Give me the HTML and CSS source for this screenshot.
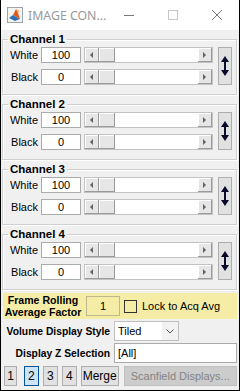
FILE: index.html
```html
<!DOCTYPE html>
<html lang="en">
<head>
    <meta charset="UTF-8">
    <title>IMAGE CONTROLS</title>
    <link rel="stylesheet" href="styles.css">
</head>
<body>
    <div class="window">
        <div class="titlebar">
            <svg class="app-icon" width="16" height="16" viewBox="0 0 16 16">
                <rect x="0.5" y="0.5" width="15" height="15" fill="#f4f4f4" stroke="#9aa3ad"/>
                <polygon points="2,11 6,8 8,9 13,12 8,14" fill="#2f6fb3"/>
                <polygon points="6,8 9,2 11,6 13,12 8,9" fill="#e2571e"/>
                <polygon points="9,2 11,6 12,4" fill="#f3a32b"/>
            </svg>
            <span class="title">IMAGE CON...</span>
            <div class="win-btns">
                <span class="win-btn">
                    <svg width="10" height="10" viewBox="0 0 10 10"><line x1="0" y1="5.5" x2="10" y2="5.5" stroke="#777" stroke-width="1"/></svg>
                </span>
                <span class="win-btn">
                    <svg width="10" height="10" viewBox="0 0 10 10"><rect x="0.5" y="0.5" width="9" height="9" fill="none" stroke="#c8c8c8"/></svg>
                </span>
                <span class="win-btn">
                    <svg width="10" height="10" viewBox="0 0 10 10"><path d="M0 0L10 10M10 0L0 10" stroke="#777" stroke-width="1"/></svg>
                </span>
            </div>
        </div>

        <div class="content">
            <fieldset class="channel">
                <legend>Channel 1</legend>
                <div class="channel-body">
                    <div class="rows">
                        <div class="row">
                            <label class="row-label">White</label>
                            <div class="edit">100</div>
                            <div class="slider">
                                <span class="arrow"><span class="tri-left"></span></span>
                                <span class="thumb"></span>
                                <span class="track"></span>
                                <span class="arrow"><span class="tri-right"></span></span>
                            </div>
                        </div>
                        <div class="row">
                            <label class="row-label">Black</label>
                            <div class="edit">0</div>
                            <div class="slider">
                                <span class="arrow"><span class="tri-left"></span></span>
                                <span class="thumb"></span>
                                <span class="track"></span>
                                <span class="arrow"><span class="tri-right"></span></span>
                            </div>
                        </div>
                    </div>
                    <button class="swap">
                        <svg width="8" height="20" viewBox="0 0 8 20"><path d="M4 3V17" stroke="#0a0a2a" stroke-width="2"/><polygon points="0,6 4,0 8,6" fill="#0a0a2a"/><polygon points="0,14 4,20 8,14" fill="#0a0a2a"/></svg>
                    </button>
                </div>
            </fieldset>

            <fieldset class="channel">
                <legend>Channel 2</legend>
                <div class="channel-body">
                    <div class="rows">
                        <div class="row">
                            <label class="row-label">White</label>
                            <div class="edit">100</div>
                            <div class="slider">
                                <span class="arrow"><span class="tri-left"></span></span>
                                <span class="thumb"></span>
                                <span class="track"></span>
                                <span class="arrow"><span class="tri-right"></span></span>
                            </div>
                        </div>
                        <div class="row">
                            <label class="row-label">Black</label>
                            <div class="edit">0</div>
                            <div class="slider">
                                <span class="arrow"><span class="tri-left"></span></span>
                                <span class="thumb"></span>
                                <span class="track"></span>
                                <span class="arrow"><span class="tri-right"></span></span>
                            </div>
                        </div>
                    </div>
                    <button class="swap">
                        <svg width="8" height="20" viewBox="0 0 8 20"><path d="M4 3V17" stroke="#0a0a2a" stroke-width="2"/><polygon points="0,6 4,0 8,6" fill="#0a0a2a"/><polygon points="0,14 4,20 8,14" fill="#0a0a2a"/></svg>
                    </button>
                </div>
            </fieldset>

            <fieldset class="channel">
                <legend>Channel 3</legend>
                <div class="channel-body">
                    <div class="rows">
                        <div class="row">
                            <label class="row-label">White</label>
                            <div class="edit">100</div>
                            <div class="slider">
                                <span class="arrow"><span class="tri-left"></span></span>
                                <span class="thumb"></span>
                                <span class="track"></span>
                                <span class="arrow"><span class="tri-right"></span></span>
                            </div>
                        </div>
                        <div class="row">
                            <label class="row-label">Black</label>
                            <div class="edit">0</div>
                            <div class="slider">
                                <span class="arrow"><span class="tri-left"></span></span>
                                <span class="thumb"></span>
                                <span class="track"></span>
                                <span class="arrow"><span class="tri-right"></span></span>
                            </div>
                        </div>
                    </div>
                    <button class="swap">
                        <svg width="8" height="20" viewBox="0 0 8 20"><path d="M4 3V17" stroke="#0a0a2a" stroke-width="2"/><polygon points="0,6 4,0 8,6" fill="#0a0a2a"/><polygon points="0,14 4,20 8,14" fill="#0a0a2a"/></svg>
                    </button>
                </div>
            </fieldset>

            <fieldset class="channel">
                <legend>Channel 4</legend>
                <div class="channel-body">
                    <div class="rows">
                        <div class="row">
                            <label class="row-label">White</label>
                            <div class="edit">100</div>
                            <div class="slider">
                                <span class="arrow"><span class="tri-left"></span></span>
                                <span class="thumb"></span>
                                <span class="track"></span>
                                <span class="arrow"><span class="tri-right"></span></span>
                            </div>
                        </div>
                        <div class="row">
                            <label class="row-label">Black</label>
                            <div class="edit">0</div>
                            <div class="slider">
                                <span class="arrow"><span class="tri-left"></span></span>
                                <span class="thumb"></span>
                                <span class="track"></span>
                                <span class="arrow"><span class="tri-right"></span></span>
                            </div>
                        </div>
                    </div>
                    <button class="swap">
                        <svg width="8" height="20" viewBox="0 0 8 20"><path d="M4 3V17" stroke="#0a0a2a" stroke-width="2"/><polygon points="0,6 4,0 8,6" fill="#0a0a2a"/><polygon points="0,14 4,20 8,14" fill="#0a0a2a"/></svg>
                    </button>
                </div>
            </fieldset>

            <div class="rolling">
                <div class="rolling-label">Frame Rolling<br>Average Factor</div>
                <div class="edit rolling-edit">1</div>
                <span class="checkbox"></span>
                <span class="check-label">Lock to Acq Avg</span>
            </div>

            <div class="form-row">
                <span class="form-label">Volume Display Style</span>
                <div class="popup">
                    <span class="popup-value">Tiled</span>
                    <span class="popup-arrow">
                        <svg width="8" height="5" viewBox="0 0 8 5"><path d="M0.5 0.5L4 4L7.5 0.5" fill="none" stroke="#555"/></svg>
                    </span>
                </div>
            </div>

            <div class="form-row">
                <span class="form-label">Display Z Selection</span>
                <div class="edit z-edit">[All]</div>
            </div>

            <div class="tabs">
                <button class="btn btn-num">1</button>
                <button class="btn btn-num btn-active">2</button>
                <button class="btn btn-num">3</button>
                <button class="btn btn-num">4</button>
                <button class="btn btn-merge">Merge</button>
                <button class="btn btn-disabled">Scanfield Displays...</button>
            </div>
        </div>
    </div>
</body>
</html>
```

FILE: styles.css
```css
* {
    margin: 0;
    padding: 0;
    box-sizing: border-box;
}

body {
    font-family: "Liberation Sans", Arial, sans-serif;
    font-size: 11px;
    color: #000;
    background: #fff;
}

.window {
    width: 240px;
    height: 391px;
    border: 1px solid #000;
    border-top: none;
    background: #f0f0f0;
    display: flex;
    flex-direction: column;
    overflow: hidden;
}

/* title bar */
.titlebar {
    height: 30px;
    flex-shrink: 0;
    background: #fff;
    display: flex;
    align-items: center;
    padding-left: 6px;
}

.app-icon {
    flex-shrink: 0;
}

.title {
    margin-left: 5px;
    font-family: "Noto Sans", sans-serif;
    font-size: 12.3px;
    color: #999;
    white-space: nowrap;
}

.win-btns {
    margin-left: auto;
    display: flex;
}

.win-btn {
    width: 44px;
    height: 30px;
    display: flex;
    align-items: center;
    justify-content: center;
}

/* main area */
.content {
    padding: 3px 2px 0 1px;
}

.channel {
    border: 1px solid #cfcfcf;
    box-shadow: inset 1px 1px 0 #fff, 1px 1px 0 #fff;
    padding: 0 4px 9px 0;
    margin-bottom: 3px;
}

.channel legend {
    font-weight: bold;
    font-size: 11.5px;
    line-height: 13px;
    margin-left: 5px;
    padding: 0 2px;
}

.channel-body {
    display: flex;
    align-items: center;
    margin-top: 1px;
}

.rows {
    display: flex;
    flex-direction: column;
    gap: 6px;
}

.row {
    display: flex;
    align-items: center;
}

.row-label {
    width: 36px;
    text-align: right;
    padding-right: 1px;
}

.edit {
    background: #fff;
    border: 1px solid #ababab;
    height: 16px;
    line-height: 14px;
    text-align: center;
}

.row .edit {
    width: 40px;
    margin-left: 2px;
}

/* scrollbar style slider */
.slider {
    width: 129px;
    height: 16px;
    margin-left: 3px;
    display: flex;
    background: #fff;
    border: 1px solid #c3c3c3;
}

.slider .arrow,
.slider .thumb {
    background: #e6e6e6;
    border-right: 1px solid #9a9a9a;
    border-bottom: 1px solid #9a9a9a;
    box-shadow: inset 1px 1px 0 #fff;
    display: flex;
    align-items: center;
    justify-content: center;
}

.slider .arrow {
    width: 14px;
}

.slider .thumb {
    width: 16px;
}

.slider .track {
    flex: 1;
}

.tri-left {
    border-top: 3px solid transparent;
    border-bottom: 3px solid transparent;
    border-right: 3px solid #606060;
}

.tri-right {
    border-top: 3px solid transparent;
    border-bottom: 3px solid transparent;
    border-left: 3px solid #606060;
}

.swap {
    width: 14px;
    height: 38px;
    margin-left: 5px;
    background: #e1e1e1;
    border: 1px solid #adadad;
    display: flex;
    align-items: center;
    justify-content: center;
}

/* rolling average strip */
.rolling {
    margin: 0 0 0 1px;
    height: 26px;
    background: #f5eda6;
    display: flex;
    align-items: center;
}

.rolling-label {
    width: 80px;
    font-weight: bold;
    font-size: 10.6px;
    text-align: center;
    line-height: 12px;
}

.rolling-edit {
    width: 34px;
    height: 20px;
    line-height: 18px;
    margin-left: 3px;
    background: #f5eda6;
    border-color: #bdb88e;
}

.checkbox {
    width: 13px;
    height: 13px;
    margin-left: 4px;
    border: 1px solid #333;
}

.check-label {
    margin-left: 5px;
}

/* popups and edits below */
.form-row {
    display: flex;
    align-items: center;
    margin-top: 2px;
    height: 20px;
}

.form-label {
    width: 108px;
    font-weight: bold;
    font-size: 10.3px;
    text-align: right;
    white-space: nowrap;
}

.popup {
    width: 65px;
    height: 20px;
    margin-left: 4px;
    background: #fff;
    border: 1px solid #bfbfbf;
    display: flex;
    align-items: center;
}

.popup-value {
    flex: 1;
    padding-left: 3px;
}

.popup-arrow {
    width: 16px;
    height: 100%;
    background: #f2f2f2;
    display: flex;
    align-items: center;
    justify-content: center;
}

.z-edit {
    width: 123px;
    height: 20px;
    line-height: 18px;
    margin-left: 4px;
    text-align: left;
    padding-left: 3px;
}

/* bottom buttons */
.tabs {
    display: flex;
    gap: 4px;
    margin: 3px 0 0 2px;
}

.btn {
    height: 20px;
    font-family: "Liberation Sans", Arial, sans-serif;
    font-size: 12px;
    background: #e1e1e1;
    border: 1px solid #adadad;
    color: #000;
}

.btn-num {
    width: 15px;
}

.btn-num:first-child {
    width: 13px;
    margin-right: 3px;
}

.btn-active {
    background: #cce4f7;
    border-color: #005499;
}

.btn-merge {
    width: 38px;
}

.btn-disabled {
    width: 114px;
    margin-left: 1px;
    font-size: 11px;
    background: #cccccc;
    border-color: #bfbfbf;
    color: #838383;
}
```
